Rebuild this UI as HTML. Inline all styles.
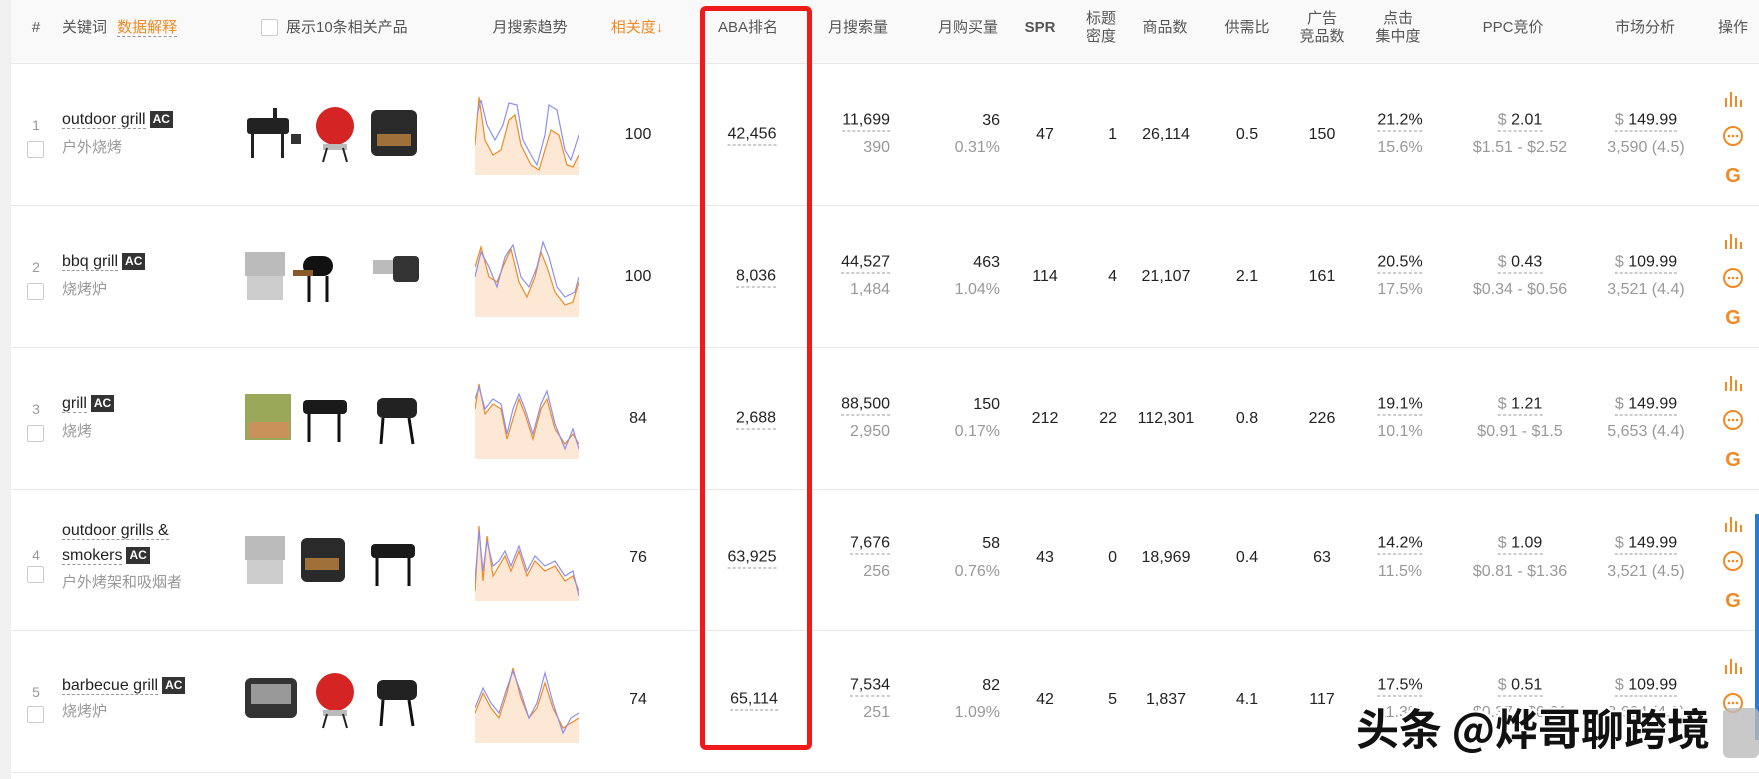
<!DOCTYPE html>
<html><head><meta charset="utf-8"><style>
body{margin:0;width:1759px;height:779px;overflow:hidden;background:#fff;font-family:"Liberation Sans","Noto Sans CJK SC",sans-serif;color:#222;position:relative}
.c{position:absolute;white-space:nowrap;transform:translate(-50%,-50%);font-size:16px;line-height:20px}
.r{position:absolute;white-space:nowrap;transform:translate(-100%,-50%);font-size:16px;line-height:20px}
.l{position:absolute;white-space:nowrap;transform:translate(0,-50%);font-size:16px;line-height:20px}
.h{color:#555;font-size:15px;font-family:"Liberation Sans","Noto Sans CJK SC",sans-serif}
.g{color:#999}
.u{border-bottom:1px dashed #999}
.o{color:#f08a24}
.ac{display:inline-block;background:#333;color:#fff;font-size:12px;font-weight:bold;padding:0 3px;line-height:17px;margin-left:4px;vertical-align:1px}
.cn{font-family:"Noto Sans CJK SC",sans-serif;color:#999;font-size:15px}
.cb{position:absolute;width:15px;height:15px;border:1px solid #ccc;border-radius:2px;background:#fff}
.row{position:absolute;left:11px;right:0;height:141px;border-bottom:1px solid #e8e8e8}
.ico{position:absolute;left:1723px}
</style></head><body>
<div style="position:absolute;left:0;top:0;width:11px;height:779px;background:#f0f0f0"></div>
<div style="position:absolute;left:11px;top:0;right:0;height:63px;background:#f9f9f9;border-bottom:1px solid #e8e8e8"></div>
<div class="c h" style="left:36px;top:28px">#</div>
<div class="l h" style="left:62px;top:28px">关键词 <span class="o u" style="margin-left:6px">数据解释</span></div>
<div class="cb" style="left:261px;top:19px"></div>
<div class="l h" style="left:286px;top:28px">展示10条相关产品</div>
<div class="c h" style="left:530px;top:28px">月搜索趋势</div>
<div class="c h o" style="left:637px;top:28px;color:#f08a24">相关度↓</div>
<div class="c h" style="left:748px;top:28px">ABA排名</div>
<div class="c h" style="left:858px;top:28px">月搜索量</div>
<div class="c h" style="left:968px;top:28px">月购买量</div>
<div class="c h" style="left:1040px;top:28px;font-weight:bold">SPR</div>
<div class="c h" style="left:1101px;top:28px;line-height:18px;text-align:center">标题<br>密度</div>
<div class="c h" style="left:1165px;top:28px">商品数</div>
<div class="c h" style="left:1247px;top:28px">供需比</div>
<div class="c h" style="left:1322px;top:28px;line-height:18px;text-align:center">广告<br>竞品数</div>
<div class="c h" style="left:1398px;top:28px;line-height:18px;text-align:center">点击<br>集中度</div>
<div class="c h" style="left:1513px;top:28px">PPC竞价</div>
<div class="c h" style="left:1645px;top:28px">市场分析</div>
<div class="c h" style="left:1733px;top:28px">操作</div>

<div class="row" style="top:64px"></div>
<div class="row" style="top:206px"></div>
<div class="row" style="top:348px"></div>
<div class="row" style="top:489px"></div>
<div class="row" style="top:631px"></div>

<div class="c g" style="left:36px;top:125px;font-size:14px">1</div><div class="cb" style="left:27px;top:141px"></div>
<div class="l" style="left:62px;top:120px"><span class="u">outdoor grill</span><span class="ac">AC</span></div>
<div class="l cn" style="left:62px;top:147px">户外烧烤</div>
<div class="c" style="left:638px;top:135px">100</div>
<div class="c u" style="left:752px;top:135px">42,456</div>
<div class="r u" style="left:890px;top:121px">11,699</div><div class="r g" style="left:890px;top:148px">390</div>
<div class="r" style="left:1000px;top:121px">36</div><div class="r g" style="left:1000px;top:148px">0.31%</div>
<div class="c" style="left:1045px;top:135px">47</div>
<div class="r" style="left:1117px;top:135px">1</div>
<div class="c" style="left:1166px;top:135px">26,114</div>
<div class="c" style="left:1247px;top:135px">0.5</div>
<div class="c" style="left:1322px;top:135px">150</div>
<div class="c u" style="left:1400px;top:121px">21.2%</div><div class="c g" style="left:1400px;top:148px">15.6%</div>
<div class="c u" style="left:1520px;top:121px"><span class="g">$</span> 2.01</div><div class="c g" style="left:1520px;top:148px">$1.51 - $2.52</div>
<div class="c u" style="left:1646px;top:121px"><span class="g">$</span> 149.99</div><div class="c g" style="left:1646px;top:148px">3,590 (4.5)</div>

<div class="c g" style="left:36px;top:267px;font-size:14px">2</div><div class="cb" style="left:27px;top:283px"></div>
<div class="l" style="left:62px;top:262px"><span class="u">bbq grill</span><span class="ac">AC</span></div>
<div class="l cn" style="left:62px;top:289px">烧烤炉</div>
<div class="c" style="left:638px;top:277px">100</div>
<div class="c u" style="left:756px;top:277px">8,036</div>
<div class="r u" style="left:890px;top:263px">44,527</div><div class="r g" style="left:890px;top:290px">1,484</div>
<div class="r" style="left:1000px;top:263px">463</div><div class="r g" style="left:1000px;top:290px">1.04%</div>
<div class="c" style="left:1045px;top:277px">114</div>
<div class="r" style="left:1117px;top:277px">4</div>
<div class="c" style="left:1166px;top:277px">21,107</div>
<div class="c" style="left:1247px;top:277px">2.1</div>
<div class="c" style="left:1322px;top:277px">161</div>
<div class="c u" style="left:1400px;top:263px">20.5%</div><div class="c g" style="left:1400px;top:290px">17.5%</div>
<div class="c u" style="left:1520px;top:263px"><span class="g">$</span> 0.43</div><div class="c g" style="left:1520px;top:290px">$0.34 - $0.56</div>
<div class="c u" style="left:1646px;top:263px"><span class="g">$</span> 109.99</div><div class="c g" style="left:1646px;top:290px">3,521 (4.4)</div>

<div class="c g" style="left:36px;top:409px;font-size:14px">3</div><div class="cb" style="left:27px;top:425px"></div>
<div class="l" style="left:62px;top:404px"><span class="u">grill</span><span class="ac">AC</span></div>
<div class="l cn" style="left:62px;top:431px">烧烤</div>
<div class="c" style="left:638px;top:419px">84</div>
<div class="c u" style="left:756px;top:419px">2,688</div>
<div class="r u" style="left:890px;top:405px">88,500</div><div class="r g" style="left:890px;top:432px">2,950</div>
<div class="r" style="left:1000px;top:405px">150</div><div class="r g" style="left:1000px;top:432px">0.17%</div>
<div class="c" style="left:1045px;top:419px">212</div>
<div class="r" style="left:1117px;top:419px">22</div>
<div class="c" style="left:1166px;top:419px">112,301</div>
<div class="c" style="left:1247px;top:419px">0.8</div>
<div class="c" style="left:1322px;top:419px">226</div>
<div class="c u" style="left:1400px;top:405px">19.1%</div><div class="c g" style="left:1400px;top:432px">10.1%</div>
<div class="c u" style="left:1520px;top:405px"><span class="g">$</span> 1.21</div><div class="c g" style="left:1520px;top:432px">$0.91 - $1.5</div>
<div class="c u" style="left:1646px;top:405px"><span class="g">$</span> 149.99</div><div class="c g" style="left:1646px;top:432px">5,653 (4.4)</div>

<div class="c g" style="left:36px;top:555px;font-size:14px">4</div><div class="cb" style="left:27px;top:566px"></div>
<div class="l" style="left:62px;top:531px"><span class="u">outdoor grills &amp;</span></div>
<div class="l" style="left:62px;top:556px"><span class="u">smokers</span><span class="ac">AC</span></div>
<div class="l cn" style="left:62px;top:582px">户外烤架和吸烟者</div>
<div class="c" style="left:638px;top:558px">76</div>
<div class="c u" style="left:752px;top:558px">63,925</div>
<div class="r u" style="left:890px;top:544px">7,676</div><div class="r g" style="left:890px;top:572px">256</div>
<div class="r" style="left:1000px;top:544px">58</div><div class="r g" style="left:1000px;top:572px">0.76%</div>
<div class="c" style="left:1045px;top:558px">43</div>
<div class="r" style="left:1117px;top:558px">0</div>
<div class="c" style="left:1166px;top:558px">18,969</div>
<div class="c" style="left:1247px;top:558px">0.4</div>
<div class="c" style="left:1322px;top:558px">63</div>
<div class="c u" style="left:1400px;top:544px">14.2%</div><div class="c g" style="left:1400px;top:572px">11.5%</div>
<div class="c u" style="left:1520px;top:544px"><span class="g">$</span> 1.09</div><div class="c g" style="left:1520px;top:572px">$0.81 - $1.36</div>
<div class="c u" style="left:1646px;top:544px"><span class="g">$</span> 149.99</div><div class="c g" style="left:1646px;top:572px">3,521 (4.5)</div>

<div class="c g" style="left:36px;top:692px;font-size:14px">5</div><div class="cb" style="left:27px;top:706px"></div>
<div class="l" style="left:62px;top:686px"><span class="u">barbecue grill</span><span class="ac">AC</span></div>
<div class="l cn" style="left:62px;top:711px">烧烤炉</div>
<div class="c" style="left:638px;top:700px">74</div>
<div class="c u" style="left:754px;top:700px">65,114</div>
<div class="r u" style="left:890px;top:686px">7,534</div><div class="r g" style="left:890px;top:713px">251</div>
<div class="r" style="left:1000px;top:686px">82</div><div class="r g" style="left:1000px;top:713px">1.09%</div>
<div class="c" style="left:1045px;top:700px">42</div>
<div class="r" style="left:1117px;top:700px">5</div>
<div class="c" style="left:1166px;top:700px">1,837</div>
<div class="c" style="left:1247px;top:700px">4.1</div>
<div class="c" style="left:1322px;top:700px">117</div>
<div class="c u" style="left:1400px;top:686px">17.5%</div><div class="c g" style="left:1400px;top:713px">11.3%</div>
<div class="c u" style="left:1520px;top:686px"><span class="g">$</span> 0.51</div><div class="c g" style="left:1520px;top:713px">$0.37 - $0.61</div>
<div class="c u" style="left:1646px;top:686px"><span class="g">$</span> 109.99</div><div class="c g" style="left:1646px;top:713px">3,604 (4.3)</div>

<svg style="position:absolute;left:475px;top:95px" width="104" height="80"><path d="M0,50 L4,2 L10,45 L18,60 L26,55 L34,25 L40,20 L46,50 L56,70 L64,75 L70,55 L76,35 L84,40 L92,70 L98,72 L104,60 L104,80 L0,80Z" fill="#fde8d6"/><polyline points="0,50 4,2 10,45 18,60 26,55 34,25 40,20 46,50 56,70 64,75 70,55 76,35 84,40 92,70 98,72 104,60" fill="none" stroke="#f08a24" stroke-width="1.2"/><polyline points="2,20 6,5 12,30 20,45 28,30 34,8 42,10 48,45 56,60 62,70 70,40 74,10 82,15 90,55 96,65 104,40" fill="none" stroke="#8f8ff0" stroke-width="1.2"/></svg>
<svg style="position:absolute;left:475px;top:237px" width="104" height="80"><path d="M0,30 L6,10 L14,40 L22,45 L30,25 L36,12 L44,45 L52,60 L60,40 L66,15 L72,30 L80,55 L90,68 L98,65 L104,45 L104,80 L0,80Z" fill="#fde8d6"/><polyline points="0,30 6,10 14,40 22,45 30,25 36,12 44,45 52,60 60,40 66,15 72,30 80,55 90,68 98,65 104,45" fill="none" stroke="#f08a24" stroke-width="1.2"/><polyline points="0,40 6,15 14,30 22,50 30,20 38,8 46,40 54,50 62,30 68,5 74,20 82,50 90,60 100,55 104,40" fill="none" stroke="#8f8ff0" stroke-width="1.2"/></svg>
<svg style="position:absolute;left:475px;top:379px" width="104" height="80"><path d="M0,30 L4,5 L10,35 L18,25 L26,30 L32,60 L38,40 L44,20 L50,35 L58,60 L66,30 L72,20 L80,50 L90,65 L98,55 L104,65 L104,80 L0,80Z" fill="#fde8d6"/><polyline points="0,30 4,5 10,35 18,25 26,30 32,60 38,40 44,20 50,35 58,60 66,30 72,20 80,50 90,65 98,55 104,65" fill="none" stroke="#f08a24" stroke-width="1.2"/><polyline points="0,20 4,8 10,30 18,20 26,25 32,55 38,30 44,15 50,30 58,55 66,25 72,12 80,45 90,70 98,50 104,70" fill="none" stroke="#8f8ff0" stroke-width="1.2"/></svg>
<svg style="position:absolute;left:475px;top:521px" width="104" height="80"><path d="M0,70 L4,5 L8,60 L12,15 L18,55 L24,45 L30,35 L36,50 L44,30 L52,55 L60,40 L70,50 L80,45 L90,60 L98,55 L104,70 L104,80 L0,80Z" fill="#fde8d6"/><polyline points="0,70 4,5 8,60 12,15 18,55 24,45 30,35 36,50 44,30 52,55 60,40 70,50 80,45 90,60 98,55 104,70" fill="none" stroke="#f08a24" stroke-width="1.2"/><polyline points="0,60 4,10 8,50 12,20 18,45 24,40 30,30 36,45 44,25 52,50 60,35 70,45 80,40 90,55 98,50 104,75" fill="none" stroke="#8f8ff0" stroke-width="1.2"/></svg>
<svg style="position:absolute;left:475px;top:663px" width="104" height="80"><path d="M0,50 L8,30 L16,45 L24,55 L32,30 L38,5 L46,35 L54,55 L62,45 L70,20 L78,45 L88,65 L96,60 L104,55 L104,80 L0,80Z" fill="#fde8d6"/><polyline points="0,50 8,30 16,45 24,55 32,30 38,5 46,35 54,55 62,45 70,20 78,45 88,65 96,60 104,55" fill="none" stroke="#f08a24" stroke-width="1.2"/><polyline points="0,45 8,25 16,40 24,50 32,25 38,8 46,30 54,55 62,40 70,10 78,40 88,70 96,55 104,50" fill="none" stroke="#8f8ff0" stroke-width="1.2"/></svg>

<svg style="position:absolute;left:243px;top:104px" width="190" height="62"><rect x="4" y="14" width="42" height="16" rx="3" fill="#222"/><rect x="30" y="4" width="4" height="12" fill="#222"/><rect x="8" y="30" width="3" height="24" fill="#222"/><rect x="38" y="30" width="3" height="24" fill="#222"/><rect x="48" y="30" width="10" height="10" fill="#333"/><circle cx="92" cy="22" r="19" fill="#d42424"/><rect x="80" y="40" width="24" height="6" fill="#bbb"/><line x1="84" y1="44" x2="80" y2="58" stroke="#222" stroke-width="2"/><line x1="100" y1="44" x2="104" y2="58" stroke="#222" stroke-width="2"/><rect x="128" y="6" width="46" height="46" rx="6" fill="#2a2a2a"/><rect x="134" y="30" width="34" height="12" fill="#a0703a"/></svg>
<svg style="position:absolute;left:243px;top:246px" width="190" height="62"><rect x="2" y="6" width="40" height="24" fill="#bbb"/><rect x="4" y="30" width="36" height="24" fill="#ccc"/><rect x="60" y="10" width="30" height="20" rx="10" fill="#111"/><rect x="50" y="24" width="20" height="6" fill="#8a5a2a"/><line x1="66" y1="30" x2="66" y2="56" stroke="#111" stroke-width="3"/><line x1="84" y1="30" x2="84" y2="56" stroke="#111" stroke-width="3"/><rect x="130" y="14" width="20" height="14" fill="#bbb"/><rect x="150" y="10" width="26" height="26" rx="4" fill="#333"/></svg>
<svg style="position:absolute;left:243px;top:388px" width="190" height="62"><rect x="2" y="6" width="46" height="46" fill="#9aa85a"/><rect x="6" y="34" width="40" height="16" fill="#c8925a"/><rect x="60" y="12" width="44" height="14" rx="4" fill="#1a1a1a"/><line x1="66" y1="26" x2="66" y2="54" stroke="#111" stroke-width="3"/><line x1="96" y1="26" x2="96" y2="54" stroke="#111" stroke-width="3"/><rect x="134" y="10" width="40" height="20" rx="6" fill="#222"/><line x1="140" y1="30" x2="138" y2="56" stroke="#111" stroke-width="3"/><line x1="166" y1="30" x2="170" y2="56" stroke="#111" stroke-width="3"/></svg>
<svg style="position:absolute;left:243px;top:530px" width="190" height="62"><rect x="2" y="6" width="40" height="24" fill="#bbb"/><rect x="4" y="30" width="36" height="24" fill="#ccc"/><rect x="58" y="8" width="44" height="44" rx="6" fill="#2a2a2a"/><rect x="62" y="28" width="34" height="12" fill="#a0703a"/><rect x="128" y="14" width="44" height="14" rx="4" fill="#1a1a1a"/><line x1="134" y1="28" x2="134" y2="56" stroke="#111" stroke-width="3"/><line x1="166" y1="28" x2="166" y2="56" stroke="#111" stroke-width="3"/></svg>
<svg style="position:absolute;left:243px;top:670px" width="190" height="62"><rect x="2" y="8" width="52" height="40" rx="6" fill="#333"/><rect x="8" y="14" width="40" height="20" fill="#999"/><circle cx="92" cy="22" r="19" fill="#d42424"/><rect x="80" y="40" width="24" height="6" fill="#bbb"/><line x1="84" y1="44" x2="80" y2="58" stroke="#222" stroke-width="2"/><line x1="100" y1="44" x2="104" y2="58" stroke="#222" stroke-width="2"/><rect x="134" y="10" width="40" height="20" rx="6" fill="#222"/><line x1="140" y1="30" x2="138" y2="56" stroke="#111" stroke-width="3"/><line x1="166" y1="30" x2="170" y2="56" stroke="#111" stroke-width="3"/></svg>

<svg class="ico" style="top:90px" width="22" height="140"><g stroke="#f08a24" stroke-width="2"><line x1="3" y1="8" x2="3" y2="17"/><line x1="8" y1="2" x2="8" y2="17"/><line x1="13" y1="6" x2="13" y2="17"/><line x1="18" y1="10" x2="18" y2="17"/></g><circle cx="10" cy="46" r="9" fill="none" stroke="#f08a24" stroke-width="2"/><g fill="#f08a24"><circle cx="6" cy="46" r="1.3"/><circle cx="10" cy="46" r="1.3"/><circle cx="14" cy="46" r="1.3"/></g><text x="10" y="92" text-anchor="middle" font-family="Liberation Sans" font-weight="bold" font-size="20" fill="#f08a24">G</text></svg>
<svg class="ico" style="top:232px" width="22" height="140"><g stroke="#f08a24" stroke-width="2"><line x1="3" y1="8" x2="3" y2="17"/><line x1="8" y1="2" x2="8" y2="17"/><line x1="13" y1="6" x2="13" y2="17"/><line x1="18" y1="10" x2="18" y2="17"/></g><circle cx="10" cy="46" r="9" fill="none" stroke="#f08a24" stroke-width="2"/><g fill="#f08a24"><circle cx="6" cy="46" r="1.3"/><circle cx="10" cy="46" r="1.3"/><circle cx="14" cy="46" r="1.3"/></g><text x="10" y="92" text-anchor="middle" font-family="Liberation Sans" font-weight="bold" font-size="20" fill="#f08a24">G</text></svg>
<svg class="ico" style="top:374px" width="22" height="140"><g stroke="#f08a24" stroke-width="2"><line x1="3" y1="8" x2="3" y2="17"/><line x1="8" y1="2" x2="8" y2="17"/><line x1="13" y1="6" x2="13" y2="17"/><line x1="18" y1="10" x2="18" y2="17"/></g><circle cx="10" cy="46" r="9" fill="none" stroke="#f08a24" stroke-width="2"/><g fill="#f08a24"><circle cx="6" cy="46" r="1.3"/><circle cx="10" cy="46" r="1.3"/><circle cx="14" cy="46" r="1.3"/></g><text x="10" y="92" text-anchor="middle" font-family="Liberation Sans" font-weight="bold" font-size="20" fill="#f08a24">G</text></svg>
<svg class="ico" style="top:515px" width="22" height="140"><g stroke="#f08a24" stroke-width="2"><line x1="3" y1="8" x2="3" y2="17"/><line x1="8" y1="2" x2="8" y2="17"/><line x1="13" y1="6" x2="13" y2="17"/><line x1="18" y1="10" x2="18" y2="17"/></g><circle cx="10" cy="46" r="9" fill="none" stroke="#f08a24" stroke-width="2"/><g fill="#f08a24"><circle cx="6" cy="46" r="1.3"/><circle cx="10" cy="46" r="1.3"/><circle cx="14" cy="46" r="1.3"/></g><text x="10" y="92" text-anchor="middle" font-family="Liberation Sans" font-weight="bold" font-size="20" fill="#f08a24">G</text></svg>
<svg class="ico" style="top:657px" width="22" height="60"><g stroke="#f08a24" stroke-width="2"><line x1="3" y1="8" x2="3" y2="17"/><line x1="8" y1="2" x2="8" y2="17"/><line x1="13" y1="6" x2="13" y2="17"/><line x1="18" y1="10" x2="18" y2="17"/></g><circle cx="10" cy="46" r="9" fill="none" stroke="#f08a24" stroke-width="2"/><g fill="#f08a24"><circle cx="6" cy="46" r="1.3"/><circle cx="10" cy="46" r="1.3"/><circle cx="14" cy="46" r="1.3"/></g></svg>

<div style="position:absolute;left:1755px;top:514px;width:4px;height:226px;background:#2b7bd8"></div>
<div style="position:absolute;left:1723px;top:708px;width:36px;height:50px;background:#bbb;border-radius:6px;opacity:.8"></div>

<div style="position:absolute;left:700px;top:6px;width:102px;height:734px;border:5px solid #f01a1a;border-radius:6px"></div>

<div style="position:absolute;left:1356px;top:698px;font-family:'Noto Sans CJK SC',sans-serif;font-size:43px;font-weight:bold;color:#111;line-height:58px;white-space:nowrap;text-shadow:2px 2px 0 #fff,-2px -2px 0 #fff,2px -2px 0 #fff,-2px 2px 0 #fff">头条 @烨哥聊跨境</div>
</body></html>
